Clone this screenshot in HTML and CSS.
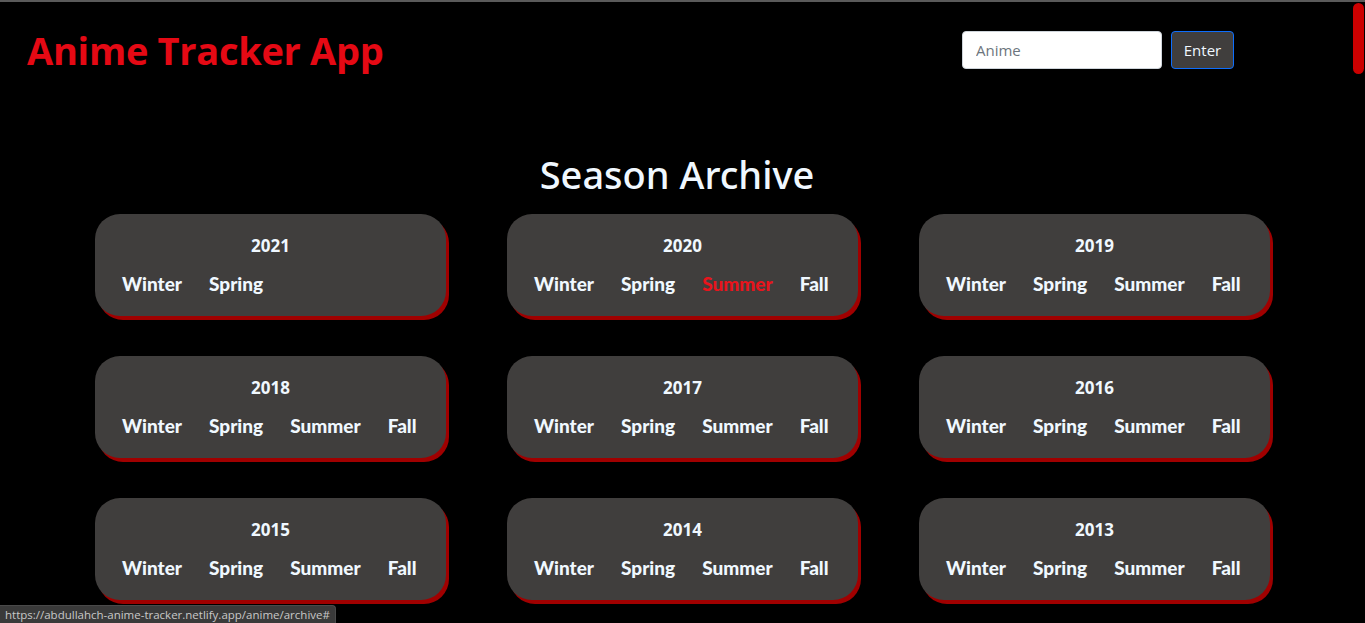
FILE: index.html
```html
<!DOCTYPE html>
<html lang="en">
<head>
<meta charset="utf-8">
<title>Anime Tracker App</title>
<link rel="stylesheet" href="styles.css">
</head>
<body>
<div class="page">
  <header class="topbar">
    <h1 class="brand">Anime Tracker App</h1>
    <form class="search" onsubmit="return false">
      <input class="search-input" type="text" placeholder="Anime">
      <button class="search-btn" type="submit">Enter</button>
    </form>
  </header>

  <main class="archive">
    <h2 class="archive-title">Season Archive</h2>
    <div class="grid">
      <div class="card"><div class="year">2021</div><ul class="seasons"><li><a href="#">Winter</a></li><li><a href="#">Spring</a></li></ul></div>
      <div class="card"><div class="year">2020</div><ul class="seasons"><li><a href="#">Winter</a></li><li><a href="#">Spring</a></li><li><a href="#" class="active">Summer</a></li><li><a href="#">Fall</a></li></ul></div>
      <div class="card"><div class="year">2019</div><ul class="seasons"><li><a href="#">Winter</a></li><li><a href="#">Spring</a></li><li><a href="#">Summer</a></li><li><a href="#">Fall</a></li></ul></div>
      <div class="card"><div class="year">2018</div><ul class="seasons"><li><a href="#">Winter</a></li><li><a href="#">Spring</a></li><li><a href="#">Summer</a></li><li><a href="#">Fall</a></li></ul></div>
      <div class="card"><div class="year">2017</div><ul class="seasons"><li><a href="#">Winter</a></li><li><a href="#">Spring</a></li><li><a href="#">Summer</a></li><li><a href="#">Fall</a></li></ul></div>
      <div class="card"><div class="year">2016</div><ul class="seasons"><li><a href="#">Winter</a></li><li><a href="#">Spring</a></li><li><a href="#">Summer</a></li><li><a href="#">Fall</a></li></ul></div>
      <div class="card"><div class="year">2015</div><ul class="seasons"><li><a href="#">Winter</a></li><li><a href="#">Spring</a></li><li><a href="#">Summer</a></li><li><a href="#">Fall</a></li></ul></div>
      <div class="card"><div class="year">2014</div><ul class="seasons"><li><a href="#">Winter</a></li><li><a href="#">Spring</a></li><li><a href="#">Summer</a></li><li><a href="#">Fall</a></li></ul></div>
      <div class="card"><div class="year">2013</div><ul class="seasons"><li><a href="#">Winter</a></li><li><a href="#">Spring</a></li><li><a href="#">Summer</a></li><li><a href="#">Fall</a></li></ul></div>
    </div>
  </main>
</div>
<div class="scroll-thumb"></div>
<div class="status-bar">https://abdullahch-anime-tracker.netlify.app/anime/archive#</div>
</body>
</html>
```
FILE: styles.css
```css
* { box-sizing: border-box; }
html, body { margin: 0; padding: 0; }
body {
  background: #000;
  height: 623px;
  overflow: hidden;
  font-family: "Open Sans", "Noto Sans", sans-serif;
  border-top: 2px solid #5a5a5a;
}
.page { width: 1365px; }

.topbar {
  display: flex;
  align-items: flex-start;
  justify-content: space-between;
  padding: 0 131px 0 27px;
  height: 110px;
}
.brand {
  margin: 0;
  padding-top: 21px;
  font-size: 38px;
  line-height: 54px;
  font-weight: 700;
  color: #e50914;
  letter-spacing: -0.3px;
}
.search {
  display: flex;
  gap: 9px;
  padding-top: 29px;
}
.search-input {
  width: 200px;
  height: 38px;
  border: 1px solid #ced4da;
  border-radius: 4px;
  padding: 0 13px;
  font-family: "Open Sans", sans-serif;
  font-size: 15px;
  color: #212529;
  background: #fff;
  outline: none;
}
.search-input::placeholder { color: #6c757d; }
.search-btn {
  width: 63px;
  height: 38px;
  border: 1px solid #0d6efd;
  border-radius: 4px;
  background: #403e3d;
  color: #f0f8ff;
  font-family: "Open Sans", sans-serif;
  font-size: 15px;
  padding: 0;
}

.archive { padding-top: 36px; }
.archive-title {
  margin: 0 11px 0 0;
  text-align: center;
  color: #f0f8ff;
  font-family: "Noto Sans", "Open Sans", sans-serif;
  font-size: 38px;
  font-weight: 500;
  line-height: 52px;
  height: 66px;
}
.grid {
  display: grid;
  grid-template-columns: repeat(3, 351px);
  column-gap: 61px;
  row-gap: 40px;
  justify-content: center;
}
.card {
  height: 102px;
  background: #403e3d;
  border-radius: 25px;
  box-shadow: 3px 4px 0 #a00000;
  padding-top: 21px;
}
.year {
  text-align: center;
  color: #f0f8ff;
  font-weight: 700;
  font-size: 17px;
  line-height: 22px;
  margin-bottom: 15px;
}
.seasons {
  list-style: none;
  margin: 0;
  padding: 0 0 0 27px;
  display: flex;
  gap: 27px;
}
.seasons a {
  font-family: "Lato", "DejaVu Sans", sans-serif;
  font-weight: 900;
  font-size: 19px;
  line-height: 24px;
  color: #f0f8ff;
  text-decoration: none;
}
.seasons a.active { color: #e8141c; }

.scroll-thumb {
  position: fixed;
  top: 3px;
  right: 1px;
  width: 11px;
  height: 71px;
  border-radius: 6px;
  background: #cc0000;
}
.status-bar {
  position: fixed;
  left: 0;
  bottom: 0;
  height: 18px;
  padding: 0 5px 0 5px;
  background: #3a3a3a;
  color: #c8c8c8;
  font-family: "Open Sans", sans-serif;
  font-size: 11.5px;
  line-height: 18px;
  border-top-right-radius: 4px;
  border: 1px solid #4a4a4a;
  border-left: 0;
  border-bottom: 0;
}
```
